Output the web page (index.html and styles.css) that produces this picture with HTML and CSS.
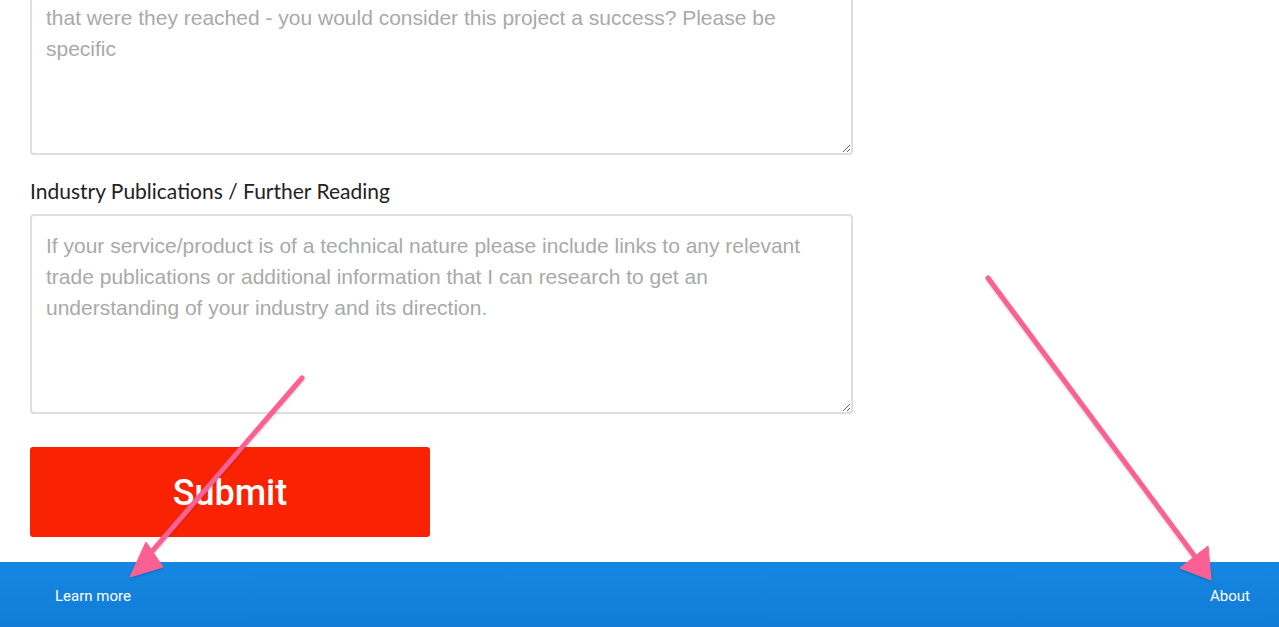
FILE: index.html
```html
<!DOCTYPE html>
<html lang="en">
<head>
  <meta charset="UTF-8">
  <title>Project brief</title>
  <link rel="stylesheet" href="styles.css">
</head>
<body>

  <!-- brief form (scrolled to the bottom) -->
  <form class="brief">
    <textarea class="field" placeholder="What are the measurable goals for this project - the specific results or targets&#10;that were they reached - you would consider this project a success? Please be specific"></textarea>

    <label class="field-label" for="reading">Industry Publications / Further Reading</label>
    <textarea class="field" id="reading" placeholder="If your service/product is of a technical nature please include links to any relevant trade publications or additional information that I can research to get an understanding of your industry and its direction."></textarea>

    <button type="button" class="submit">Submit</button>
  </form>

  <footer class="footer">
    <a href="#">Learn more</a>
    <a href="#">About</a>
  </footer>

  <!-- annotation arrows drawn over the screenshot -->
  <svg class="marks" width="1279" height="627" viewBox="0 0 1279 627">
    <defs>
      <filter id="soft" x="-10%" y="-10%" width="120%" height="120%">
        <feDropShadow dx="0" dy="1" stdDeviation="0.8" flood-color="#000" flood-opacity="0.25"/>
      </filter>
    </defs>
    <g fill="#fb6195" stroke="#fb6195" filter="url(#soft)">
      <line x1="302" y1="378" x2="148" y2="556" stroke-width="5" stroke-linecap="round"/>
      <polygon points="130,577 163,567 146,542" stroke-width="1" stroke-linejoin="round"/>
      <line x1="988" y1="278" x2="1196" y2="558" stroke-width="5" stroke-linecap="round"/>
      <polygon points="1211,580 1180,568 1208,546" stroke-width="1" stroke-linejoin="round"/>
    </g>
  </svg>

</body>
</html>
```

FILE: styles.css
```css
/* page */
body {
  margin: 0;
  background: #fff;
  font-family: "Liberation Sans", Arial, sans-serif;
  overflow: hidden;
}

/* form column */
.brief {
  display: flex;
  flex-direction: column;
  align-items: flex-start;
  margin-top: -45px;
  padding: 0 30px;
}

.field {
  box-sizing: border-box;
  width: 823px;
  height: 200px;
  padding: 14px 14px;
  border: 2px solid #dedede;
  border-radius: 4px;
  font-family: "Liberation Sans", Arial, sans-serif;
  font-size: 21px;
  line-height: 31px;
  color: #333;
  resize: vertical;
  margin: 0 0 24px;
}

.field::placeholder {
  color: #a9a9a9;
}

.field-label {
  font-family: Lato, "Open Sans", sans-serif;
  font-size: 21px;
  line-height: 24px;
  color: #222;
  margin-bottom: 11px;
}

#reading {
  margin-bottom: 33px;
}

/* submit button */
.submit {
  width: 400px;
  height: 90px;
  padding-top: 2px;
  border: none;
  border-radius: 3px;
  background: #f92303;
  color: #fff;
  font-family: Roboto, "Liberation Sans", sans-serif;
  font-size: 36px;
  font-weight: 500;
  cursor: pointer;
}

/* footer bar */
.footer {
  display: flex;
  justify-content: space-between;
  margin-top: 25px;
  height: 65px;
  padding: 24px 29px 0 55px;
  box-sizing: border-box;
  background: linear-gradient(#1587e2, #127cd7);
}

.footer a {
  font-family: Roboto, "Liberation Sans", sans-serif;
  font-size: 15px;
  line-height: 20px;
  color: #fff;
  text-decoration: none;
}

/* annotation layer */
.marks {
  position: absolute;
  left: 0;
  top: 0;
  pointer-events: none;
}
```
